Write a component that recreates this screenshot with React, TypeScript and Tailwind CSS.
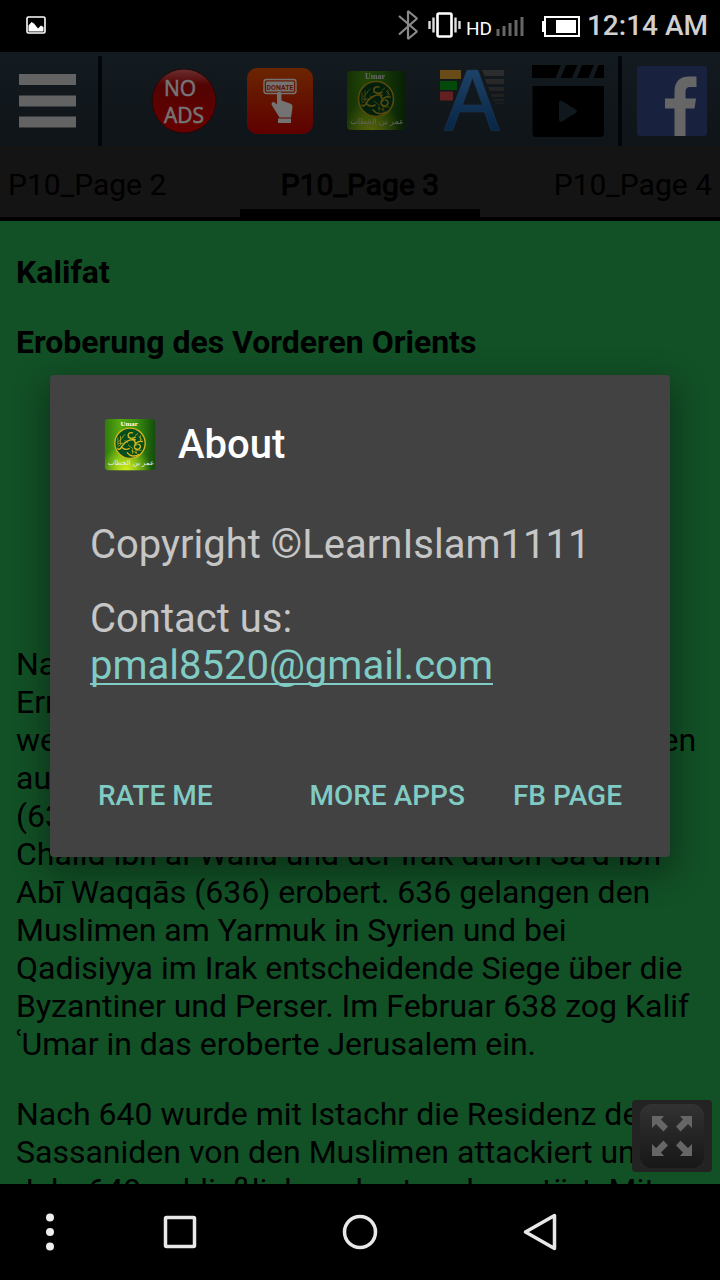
type TabProps = {
    label: string
    active?: boolean
    align: string
}

const tabs: TabProps[] = [
    { label: 'P10_Page 2', align: 'text-left' },
    { label: 'P10_Page 3', align: 'text-center', active: true },
    { label: 'P10_Page 4', align: 'text-right' },
]

const lines = [
    'Nach dem Tod von Abū Bakr und der',
    'Ernennung von ʿUmar zum Kalifen',
    'werden die Eroberungen der Muslime gen Osten',
    'auf Syrien und Palästina gelenkt',
    '(634). Syrien wurde 635 durch',
    'Chālid ibn al-Walīd und der Irak durch Saʿd ibn',
    'Abī Waqqās (636) erobert. 636 gelangen den',
    'Muslimen am Yarmuk in Syrien und bei',
    'Qadisiyya im Irak entscheidende Siege über die',
    'Byzantiner und Perser. Im Februar 638 zog Kalif',
    'ʿUmar in das eroberte Jerusalem ein.',
]

const moreLines = [
    'Nach 640 wurde mit Istachr die Residenz der',
    'Sassaniden von den Muslimen attackiert und im',
    'Jahr 649 schließlich erobert und zerstört. Mit',
]

const AppIcon = ({ className }: { className: string }) => {
    return (
        <svg className={className} viewBox="0 0 60 60">
            <defs>
                <linearGradient id="leaf" x1="0" x2="1">
                    <stop offset="0" stopColor="#2f7a10" />
                    <stop offset="0.3" stopColor="#56a80e" />
                    <stop offset="0.6" stopColor="#3d9412" />
                    <stop offset="1" stopColor="#124d0b" />
                </linearGradient>
                <radialGradient id="glow" cx="0.42" cy="1" r="0.5">
                    <stop offset="0" stopColor="#d3f01c" />
                    <stop offset="1" stopColor="#d3f01c" stopOpacity="0" />
                </radialGradient>
            </defs>
            <rect x="1" y="0" width="58" height="59" rx="4" fill="url(#leaf)" />
            <rect x="1" y="0" width="58" height="59" rx="4" fill="url(#glow)" />
            <circle cx="30" cy="28" r="17.500" fill="#034d1f" stroke="#d3b41c" strokeWidth="1.600" />
            <g fill="none" stroke="#d6b91e" strokeLinecap="round" strokeLinejoin="round">
                <path strokeWidth="1.600" d="M33 16c-3-1-6 1-5 4s5 3 8 1M28 21c4 1 8 4 9 9M36 24c-6-1-12 2-15 7-2 4-4 5-5 3M20 32c2 3 6 4 9 2M44 26c-4-1-9 2-9 6 0 3 4 4 6 2s1-5-2-5M27 39c3 4 9 5 13 2" />
                <path strokeWidth="0.800" d="M16 22v8M19 20v9M22 21l-5 5M40 20l4 4M42 19v7M38 36h5M32 37l6 2M33 35v5M37 34v6M17 28h7M24 18l-3 3M24 25l3 2M39 17l-3 2M16 32l4-3M28 30l5 4" />
            </g>
            <text x="29" y="8" fill="#fff" fontSize="8" fontWeight="700" textAnchor="middle" fontFamily="Liberation Serif, serif">Umar</text>
            <text x="31" y="53" fill="#eee" fontSize="8" textAnchor="middle" fontFamily="DejaVu Sans, sans-serif">عمر بن الخطاب</text>
        </svg>
    )
}

const StatusBar = () => {
    return (
        <header className="flex h-13 shrink-0 items-center justify-between bg-black pr-3 pl-6">
            <svg className="h-6 w-6" viewBox="0 0 24 24">
                <rect x="3" y="3" width="18" height="16" rx="1.500" fill="none" stroke="#fff" strokeWidth="1.600" />
                <path d="M4.500 17.500v-6l3-3.500 2.500 1.500 4 5 3-3 2.500 1.500v4.500z" fill="#fff" />
            </svg>
            <div className="flex items-center">
                <svg className="h-9 w-48" viewBox="1 0 192 36" fill="none">
                    <path d="M5 8l18 15.500-9 7.500V3l9 7.500L5 26.500" stroke="#8a8a8a" strokeWidth="2.200" strokeLinejoin="bevel" />
                    <rect x="43.500" y="5.500" width="14" height="23" rx="1.500" stroke="#fff" strokeWidth="2.600" />
                    <path d="M39.500 9.500v15M61.500 9.500v15M35.500 13v8M65.500 13v8" stroke="#ddd" strokeWidth="2.400" />
                    <text x="72" y="27" fill="#fff" fontSize="19" fontFamily="Roboto, sans-serif">HD</text>
                    <path d="M104 28v-7M110 28v-10M116 28v-13M122 28v-16M128 28v-19" stroke="#666" strokeWidth="3" />
                    <path d="M151 9h34v19h-34z" stroke="#fff" strokeWidth="2" />
                    <path d="M148 13h2v11h-2zM162 12h20v13h-20z" fill="#fff" />
                </svg>
                <span className="text-[28px] leading-8 font-medium text-[#d0d0d0]">12:14 AM</span>
            </div>
        </header>
    )
}

const Toolbar = () => {
    return (
        <div className="flex h-[94px] shrink-0 bg-linear-to-b from-[#141b20] to-[#0e1418] pt-1">
            <button aria-label="Menu" className="flex w-[98px] items-center pl-[18px]">
                <svg className="h-14 w-[58px]" viewBox="0 0 58 56" fill="#636363">
                    <path d="M1 1h57v11H1zM1 22.500h57v11H1zM1 43.500h57v11H1z" />
                </svg>
            </button>
            <div className="w-1 bg-[#02060a]" />
            <div className="flex flex-1 items-center justify-end">
                <button aria-label="No ads" className="flex w-24 justify-center">
                    <svg className="h-[66px] w-[66px]" viewBox="0 0 66 66">
                        <defs>
                            <linearGradient id="red" x2="0" y2="1">
                                <stop offset="0" stopColor="#6d3030" />
                                <stop offset="0.250" stopColor="#520303" />
                                <stop offset="1" stopColor="#680000" />
                            </linearGradient>
                        </defs>
                        <circle cx="33" cy="33" r="32" fill="url(#red)" stroke="#220808" />
                        <g fill="#757575" stroke="#757575" strokeWidth="0.600" fontSize="21" fontFamily="Open Sans, sans-serif">
                            <text x="13" y="28">NO</text>
                            <text x="13" y="55">ADS</text>
                        </g>
                    </svg>
                </button>
                <button aria-label="Donate" className="flex w-24 justify-center">
                    <svg className="h-[66px] w-[66px]" viewBox="0 0 66 66">
                        <defs>
                            <linearGradient id="orange" x2="0" y2="1">
                                <stop offset="0" stopColor="#6b2500" />
                                <stop offset="1" stopColor="#5e0000" />
                            </linearGradient>
                        </defs>
                        <rect width="66" height="66" rx="10" fill="url(#orange)" />
                        <rect x="17" y="11.500" width="32" height="14" rx="2.500" fill="none" stroke="#737373" strokeWidth="1.400" />
                        <rect x="19" y="13.500" width="28" height="10" rx="1" fill="#737373" />
                        <text x="33" y="21.500" fill="#5f1400" fontSize="7" fontWeight="700" textAnchor="middle" fontFamily="Roboto, sans-serif">DONATE</text>
                        <path d="M30 26c0-3 4.500-3 4.500 0v6.500l8.500 3c2 .6 2.700 2 2.500 4l-1.500 10H32.500l-7.500-12c-1.500-2.500.8-4.500 2.800-3l2.200 2zM31 50.500h13v4.500H31z" fill="#737373" />
                    </svg>
                </button>
                <button aria-label="Umar" className="flex w-24 justify-center">
                    <AppIcon className="h-15 w-15 brightness-[0.4]" />
                </button>
                <button aria-label="Font" className="flex w-24 justify-center">
                    <svg className="h-16 w-16" viewBox="0 0 64 64">
                        <defs>
                            <linearGradient id="blue" x2="0" y2="1">
                                <stop offset="0" stopColor="#1d4269" />
                                <stop offset="1" stopColor="#082645" />
                            </linearGradient>
                            <linearGradient id="steel" x2="0" y2="1">
                                <stop offset="0" stopColor="#2e2e2e" />
                                <stop offset="1" stopColor="#1c1c1c" />
                            </linearGradient>
                        </defs>
                        <path d="M0 1h21v9H0z" fill="#694b17" />
                        <path d="M0 12h17v9H0z" fill="#05490a" />
                        <path d="M0 22.500h13v9H0z" fill="#622020" />
                        <path d="M42 1h22v6H44.500zM45 10h19v5H47zM48 18h16v4H50zM51 25h13v3H52zM53 30h11v2H54zM55 33.500h9v1.500H56z" fill="url(#steel)" />
                        <path d="M27 1h11l21.500 60.500h-8.500L44.500 43H19.500l-7 18.500H4zM32.500 9L22.500 36H42.500z" fill="url(#blue)" stroke="#203a55" strokeWidth="0.500" fillRule="evenodd" />
                    </svg>
                </button>
                <button aria-label="Videos" className="flex w-24 justify-center">
                    <svg className="h-[72px] w-[72px]" viewBox="0 0 72 72">
                        <path d="M0 0h29l-5.500 13H0zM34 0h11.500L40 13H28.500zM50 0h12l-5.500 13H45zM66.500 0H72v13H61.500zM.5 21H72v47a4 4 0 0 1-4 4H4.500a4 4 0 0 1-4-4z" fill="#000" />
                        <path d="M27 38.500q0-4.500 4-2l12.500 8q3 1.800 0 3.600L31 56q-4 2.500-4-2z" fill="#11181d" />
                    </svg>
                </button>
            </div>
            <div className="ml-[2px] w-1 bg-[#02060a]" />
            <button aria-label="Facebook" className="flex w-[98px] items-center justify-center pl-[2px]">
                <svg className="h-[70px] w-[70px]" viewBox="0 0 70 70">
                    <rect width="70" height="70" rx="3" fill="#18223f" />
                    <path d="M37.500 70V42.500h-9.500v-10h9.500v-7C37.500 15 43.500 10.500 52 10.500h7.500V21h-5.500c-4.500 0-5.500 2-5.500 5.500v6h10.500l-1.500 10h-9V70z" fill="#666" />
                </svg>
            </button>
        </div>
    )
}

const Tab = ({ label, active, align }: TabProps) => {
    return (
        <button
            role="tab"
            aria-selected={!!active}
            className={`h-[71px] border-b-8 px-2 pt-[14px] text-[30px] ${align} ${active ? 'border-black [-webkit-text-stroke:1px_black]' : 'border-transparent'}`}
        >
            {label}
        </button>
    )
}

const AboutDialog = () => {
    return (
        <div className="absolute inset-x-0 top-12 bottom-24 flex items-center justify-center px-[50px]">
            <section role="dialog" aria-labelledby="about" className="w-full rounded-[4px] bg-[#424242] px-10 pt-10 pb-[25px] shadow-[0_12px_32px_4px_rgba(0,0,0,0.35)]">
                <div className="flex h-15 items-center gap-[22px] pl-[14px]">
                    <AppIcon className="h-[52px] w-[52px]" />
                    <h1 id="about" className="text-[40px] font-medium text-white">About</h1>
                </div>
                <div className="mt-[46px] text-[40px] leading-[47px] text-[#c6c6c6]">
                    <p>Copyright ©LearnIslam1111</p>
                    <p className="mt-[27px]">Contact us:</p>
                    <a href="mailto:pmal8520@gmail.com" className="block text-[#80cbc4] underline decoration-2 underline-offset-4 [text-decoration-skip-ink:none]">
                        pmal8520@gmail.com
                    </a>
                </div>
                <div className="mt-[71px] flex h-18 items-center px-2 text-[28px] font-medium text-[#80cbc4]">
                    <button className="mr-auto">RATE ME</button>
                    <button className="mr-12">MORE APPS</button>
                    <button>FB PAGE</button>
                </div>
            </section>
        </div>
    )
}

const NavBar = () => {
    return (
        <nav className="grid h-24 shrink-0 grid-cols-[5fr_8fr_10fr_8fr_5fr] place-items-center bg-black">
            <button aria-label="More">
                <svg className="h-10 w-10" viewBox="0 0 40 40" fill="#eee">
                    <circle cx="20" cy="5.500" r="4" />
                    <circle cx="20" cy="20" r="4" />
                    <circle cx="20" cy="34.500" r="4" />
                </svg>
            </button>
            <button aria-label="Recent apps">
                <svg className="h-10 w-10" viewBox="0 0 40 40" fill="none" stroke="#e8e8e8" strokeWidth="3.500">
                    <rect x="5.500" y="5.500" width="29" height="29" rx="1" />
                </svg>
            </button>
            <button aria-label="Home">
                <svg className="h-10 w-10" viewBox="0 0 40 40" fill="none" stroke="#e8e8e8" strokeWidth="3.500">
                    <circle cx="20" cy="20" r="15.500" />
                </svg>
            </button>
            <button aria-label="Back">
                <svg className="h-10 w-10" viewBox="0 0 40 40" fill="none" stroke="#e8e8e8" strokeWidth="3.500" strokeLinejoin="round">
                    <path d="M34.500 3.500v33L5.500 20z" />
                </svg>
            </button>
        </nav>
    )
}

const App = () => {
    return (
        <div className="relative flex h-screen flex-col overflow-hidden bg-black font-[Roboto,'Noto_Sans',sans-serif] text-black">
            <StatusBar />
            <Toolbar />
            <div role="tablist" className="grid shrink-0 grid-cols-3 border-b-4 border-black bg-[#141414]">
                {tabs.map((tab) => (
                    <Tab key={tab.label} {...tab} />
                ))}
            </div>

            <main className="relative min-h-0 flex-1 overflow-hidden bg-[#125026] px-4 pt-8 text-[32px] leading-[38px] whitespace-nowrap">
                <h2 className="font-bold">Kalifat</h2>
                <h2 className="mt-8 font-bold">Eroberung des Vorderen Orients</h2>
                <div className="h-[284px]" />
                <p>
                    {lines.map((line) => (
                        <span key={line} className="block">{line}</span>
                    ))}
                </p>
                <p className="mt-8">
                    {moreLines.map((line) => (
                        <span key={line} className="block">{line}</span>
                    ))}
                </p>

                <button aria-label="Fullscreen" className="absolute right-2 bottom-3 flex h-18 w-20 justify-center rounded-[4px] bg-[#232323] pt-1">
                    <span className="flex h-16 w-16 items-center justify-center rounded-xl bg-linear-to-b from-[#323232] to-[#171717]">
                        <svg className="h-10 w-10" viewBox="0 0 40 40" fill="#666">
                            <path d="M0 0h12L9 3.500l7 7-4.500 5-7.500-7.500L0 12zM40 0v12l-4-4-7.500 7.500-4.500-5 7-7L28 0zM0 40V28l4 4 7.500-7.500 4.500 5-7 7 3 3.500zM40 40H28l3-3.500-7-7 4.500-5L36 32l4-4z" />
                        </svg>
                    </span>
                </button>
            </main>

            <NavBar />
            <AboutDialog />
        </div>
    )
}

export default App
